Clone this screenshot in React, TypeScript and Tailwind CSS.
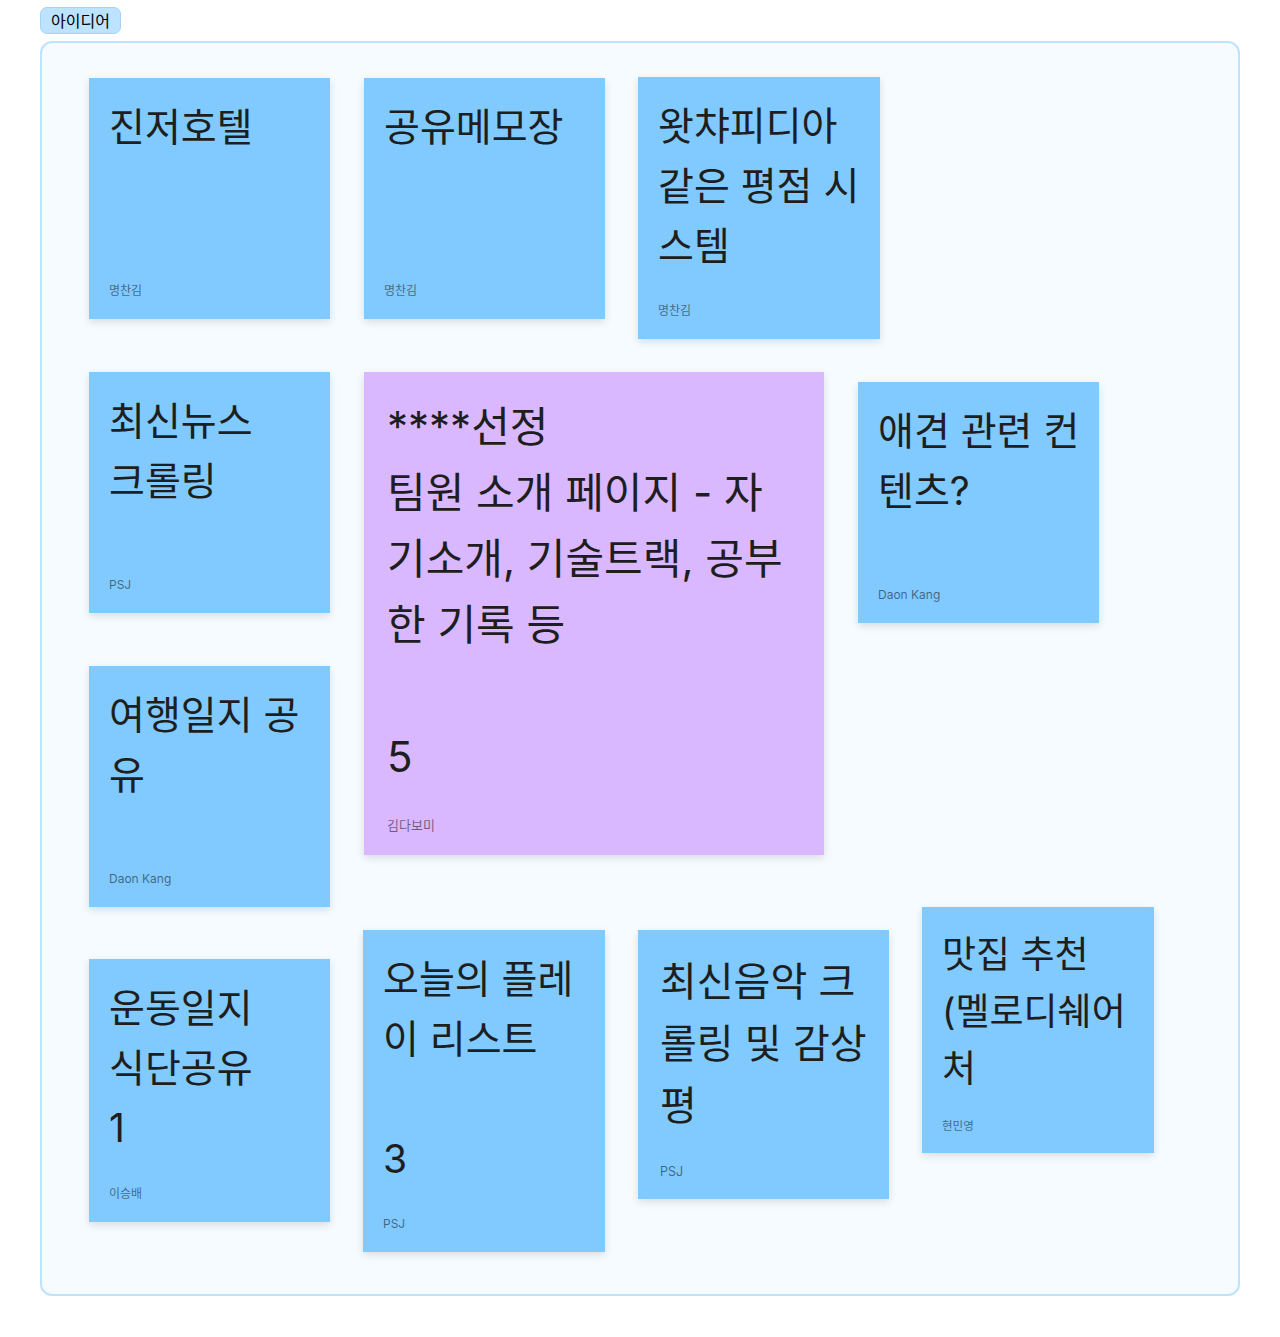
type NoteProps = {
  pos: string;
  bg: string;
  pad: string;
  textCls: string;
  authorCls: string;
  lines: string[];
  author: string;
};

const STD_PAD = "pl-[20px] pr-[8px] pt-[19px] pb-[20px]";
const STD_TEXT = "text-[39px] leading-[60px] text-[#1e1e1e]";
const STD_AUTHOR = "text-[12px] leading-[16px] text-black/50";
const BLUE = "bg-[#80caff]";

function Note({ pos, bg, pad, textCls, authorCls, lines, author }: NoteProps) {
  return (
    <div
      className={`absolute flex flex-col justify-between shadow-[0_3px_8px_rgba(0,0,0,0.12)] ${bg} ${pad} ${pos}`}
    >
      <div className={textCls}>
        {lines.map((line, i) => (
          <div key={i} className="whitespace-nowrap">
            {line || "\u00a0"}
          </div>
        ))}
      </div>
      <div className={authorCls}>{author}</div>
    </div>
  );
}

export default function App() {
  return (
    <div className="min-h-[1337px] bg-white pt-[7px] pl-[40px] font-['Inter','Noto_Sans_CJK_KR',sans-serif]">
      <div className="inline-flex h-[27px] items-center rounded-[7px] border border-[#a5d3f4] bg-[#bde3ff] px-[10px] text-[16px] leading-none text-black">
        아이디어
      </div>

      <div className="relative mt-[7px] h-[1255px] w-[1200px] rounded-[12px] border-2 border-[#bde3ff] bg-[#f5fbff]">
        <Note
          pos="left-[47px] top-[35px] w-[241px] h-[241px]"
          bg={BLUE}
          pad={STD_PAD}
          textCls={STD_TEXT}
          authorCls={STD_AUTHOR}
          lines={["진저호텔"]}
          author="명찬김"
        />
        <Note
          pos="left-[322px] top-[35px] w-[241px] h-[241px]"
          bg={BLUE}
          pad={STD_PAD}
          textCls={STD_TEXT}
          authorCls={STD_AUTHOR}
          lines={["공유메모장"]}
          author="명찬김"
        />
        <Note
          pos="left-[596px] top-[34px] w-[242px] h-[262px]"
          bg={BLUE}
          pad={STD_PAD}
          textCls={STD_TEXT}
          authorCls={STD_AUTHOR}
          lines={["왓챠피디아", "같은 평점 시", "스템"]}
          author="명찬김"
        />
        <Note
          pos="left-[47px] top-[329px] w-[241px] h-[241px]"
          bg={BLUE}
          pad={STD_PAD}
          textCls={STD_TEXT}
          authorCls={STD_AUTHOR}
          lines={["최신뉴스", "크롤링"]}
          author="PSJ"
        />
        <Note
          pos="left-[322px] top-[329px] w-[460px] h-[483px]"
          bg="bg-[#d9b8ff]"
          pad="pl-[23px] pr-[8px] pt-[22px] pb-[22px]"
          textCls="text-[42px] leading-[66px] text-[#1e1e1e]"
          authorCls="text-[13px] leading-[16px] text-black/50"
          lines={["****선정", "팀원 소개 페이지 - 자", "기소개, 기술트랙, 공부", "한 기록 등", "", "5"]}
          author="김다보미"
        />
        <Note
          pos="left-[816px] top-[339px] w-[241px] h-[241px]"
          bg={BLUE}
          pad={STD_PAD}
          textCls={STD_TEXT}
          authorCls={STD_AUTHOR}
          lines={["애견 관련 컨", "텐츠?"]}
          author="Daon Kang"
        />
        <Note
          pos="left-[47px] top-[623px] w-[241px] h-[241px]"
          bg={BLUE}
          pad={STD_PAD}
          textCls={STD_TEXT}
          authorCls={STD_AUTHOR}
          lines={["여행일지 공", "유"]}
          author="Daon Kang"
        />
        <Note
          pos="left-[47px] top-[916px] w-[241px] h-[263px]"
          bg={BLUE}
          pad={STD_PAD}
          textCls={STD_TEXT}
          authorCls={STD_AUTHOR}
          lines={["운동일지", "식단공유", "1"]}
          author="이승배"
        />
        <Note
          pos="left-[321px] top-[887px] w-[242px] h-[322px]"
          bg={BLUE}
          pad={STD_PAD}
          textCls={STD_TEXT}
          authorCls={STD_AUTHOR}
          lines={["오늘의 플레", "이 리스트", "", "3"]}
          author="PSJ"
        />
        <Note
          pos="left-[596px] top-[887px] w-[251px] h-[269px]"
          bg={BLUE}
          pad="pl-[22px] pr-[6px] pt-[21px] pb-[19px]"
          textCls="text-[40px] leading-[62px] text-[#1e1e1e]"
          authorCls="text-[12.5px] leading-[16px] text-black/50"
          lines={["최신음악 크", "롤링 및 감상", "평"]}
          author="PSJ"
        />
        <Note
          pos="left-[880px] top-[864px] w-[232px] h-[246px]"
          bg={BLUE}
          pad="pl-[20px] pr-[6px] pt-[19px] pb-[19px]"
          textCls="text-[37px] leading-[57px] text-[#1e1e1e]"
          authorCls="text-[11.5px] leading-[16px] text-black/50"
          lines={["맛집 추천", "(멜로디쉐어", "처"]}
          author="현민영"
        />
      </div>
    </div>
  );
}
